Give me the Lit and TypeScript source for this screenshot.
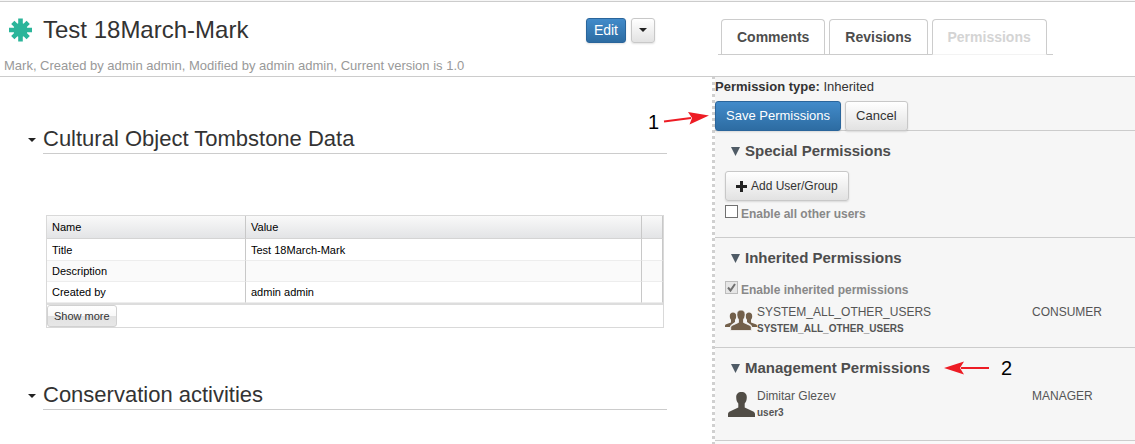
import { LitElement, html, css, nothing } from "lit";
import { customElement, property, state } from "lit/decorators.js";

const sans = css`"Liberation Sans", Arial, Helvetica, sans-serif`;

const buttonStyles = css`
  button {
    font-family: inherit;
    cursor: pointer;
  }
  .btn {
    box-sizing: border-box;
    display: inline-flex;
    align-items: center;
    justify-content: center;
    height: 30px;
    padding: 0 10px;
    border: 1px solid #c8c8c8;
    border-radius: 3px;
    background: linear-gradient(#fff, #e2e2e2);
    box-shadow: 0 1px 2px rgba(0, 0, 0, 0.12);
    color: #333;
    font-size: 12px;
    line-height: 16px;
    white-space: nowrap;
  }
  .btn.primary {
    border-color: #2a659b;
    background: linear-gradient(#428bca, #2d6ca2);
    color: #fff;
  }
`;

/** Collapsible block of the object form. */
@customElement("form-section")
class FormSection extends LitElement {
  @property() heading = "";
  @state() private open = true;

  static styles = css`
    :host {
      display: block;
    }
    .heading {
      display: flex;
      align-items: center;
      margin: 0;
      font-size: 22px;
      font-weight: 400;
      line-height: 28px;
      color: #333;
    }
    .toggle {
      flex: none;
      display: flex;
      width: 15px;
      padding: 0;
      border: 0;
      background: none;
      cursor: pointer;
    }
    .label {
      flex: 1;
      border-bottom: 1px solid #ccc;
    }
    .body {
      padding-left: 18px;
    }
  `;

  render() {
    return html`
      <h2 class="heading">
        <button class="toggle" aria-expanded=${this.open} aria-label="Toggle ${this.heading}" @click=${() => (this.open = !this.open)}>
          <svg width="8" height="4" viewBox="0 0 8 4"><path d="M0 0h8L4 4z" fill="#222" /></svg>
        </button>
        <span class="label">${this.heading}</span>
      </h2>
      ${this.open ? html`<div class="body"><slot></slot></div>` : nothing}
    `;
  }
}

/** Name/value grid with a footer button. */
@customElement("property-grid")
class PropertyGrid extends LitElement {
  private rows = [
    ["Title", "Test 18March-Mark"],
    ["Description", ""],
    ["Created by", "admin admin"],
  ];

  static styles = css`
    :host {
      display: block;
      border: 1px solid #d9d9d9;
      font-family: ${sans};
      font-size: 11px;
      line-height: 16px;
      color: #000;
    }
    table {
      width: 100%;
      table-layout: fixed;
      border-collapse: separate;
      border-spacing: 0;
      border-bottom: 2px solid #ddd;
    }
    th,
    td {
      box-sizing: border-box;
      height: 21px;
      padding: 0 5px;
      border-right: 1px solid #c8c8c8;
      border-bottom: 1px solid #ededed;
      text-align: left;
      font-weight: 400;
    }
    th {
      height: 23px;
      border-bottom-color: #d4d4d4;
      background: linear-gradient(#f9f9f9, #e3e4e6);
    }
    tbody tr:first-child td {
      height: 22px;
    }
    .name {
      width: 199px;
    }
    .end {
      width: 21px;
    }
    tbody tr:nth-child(even) td {
      background: #fafafa;
    }
    .more {
      display: block;
      height: 22px;
      padding: 0 6px;
      border: 1px solid #d1d1d1;
      border-radius: 3px;
      background: linear-gradient(#fff, #f9f9f9 48%, #e2e2e2 52%, #e7e7e7);
      color: #333;
      font: inherit;
      cursor: pointer;
    }
  `;

  render() {
    return html`
      <table>
        <thead>
          <tr><th class="name">Name</th><th>Value</th><th class="end"></th></tr>
        </thead>
        <tbody>
          ${this.rows.map(([name, value]) => html`<tr><td>${name}</td><td>${value}</td><td></td></tr>`)}
        </tbody>
      </table>
      <button class="more">Show more</button>
    `;
  }
}

/** Titled block of the permissions panel. */
@customElement("permission-group")
class PermissionGroup extends LitElement {
  @property() heading = "";
  @state() private open = true;

  static styles = css`
    :host {
      display: block;
      border-top: 1px solid #ccc;
      padding: 10px 10px 15px;
    }
    h3 {
      margin: 0 0 10px;
      font-size: 15px;
      line-height: 20px;
    }
    .toggle {
      display: flex;
      align-items: center;
      gap: 5px;
      padding: 0 0 0 6px;
      border: 0;
      background: none;
      color: #4d4d4d;
      font: inherit;
      cursor: pointer;
    }
  `;

  render() {
    return html`
      <h3>
        <button class="toggle" aria-expanded=${this.open} @click=${() => (this.open = !this.open)}>
          <svg width="9" height="9" viewBox="0 0 9 9"><path d="M0 0h9L4.5 9z" fill="#4f5b66" /></svg>
          ${this.heading}
        </button>
      </h3>
      ${this.open ? html`<slot></slot>` : nothing}
    `;
  }
}

/** One person or group along with its role. */
@customElement("authority-row")
class AuthorityRow extends LitElement {
  @property() name = "";
  @property() account = "";
  @property() role = "";
  @property() kind = "user";

  static styles = css`
    :host {
      display: grid;
      grid-template-columns: 32px minmax(0, 1fr) 93px;
      align-items: start;
      color: #555;
      font-size: 12px;
      line-height: 16px;
    }
    .icon {
      display: flex;
      padding-top: 4px;
    }
    .account {
      font-size: 10px;
      font-weight: 700;
      line-height: 18px;
    }
  `;

  private get icon() {
    return this.kind === "group"
      ? html`<svg width="32" height="25" viewBox="0 -2 32 25" fill="#73604b">
          <path d="M8 2.500c2 0 3.200 1.400 3.200 3.500 0 1.600-.4 3-1.200 3.800v2.200l-3.500 2.600c-1 .8-1.500 1.700-1.700 2.400H0v-1.200c0-.8.4-1.300 1.200-1.600L6 12.400V9.800C5.200 9 4.800 7.600 4.800 6 4.800 3.900 6 2.500 8 2.500z" />
          <path d="M24 2.500c-2 0-3.200 1.400-3.200 3.500 0 1.600.4 3 1.200 3.800v2.200l3.500 2.600c1 .8 1.500 1.700 1.700 2.400H32v-1.200c0-.8-.4-1.300-1.200-1.600L26 12.400V9.800c.8-.8 1.200-2.200 1.200-3.800 0-2.100-1.200-3.500-3.200-3.500z" />
          <path d="M16 0c2.700 0 4.100 1.600 4.100 4.300 0 2.200-.6 4-1.600 5v3.200l6 2.700c1.300.6 1.800 1.200 1.800 2.400V20.500H5.700v-2.900c0-1.200.5-1.800 1.800-2.400l6-2.700V9.300c-1-1-1.600-2.800-1.600-5C11.900 1.600 13.300 0 16 0z" stroke="#f6f6f6" stroke-width=".8" />
        </svg>`
      : html`<svg width="32" height="25" viewBox="0 0 32 25" fill="#514d46">
          <path d="M16.500 0c3.500 0 5.300 2 5.300 5.300 0 2.700-.8 5-2.100 6.200v4l8 3.700c1.600.7 2.300 1.500 2.300 3V25H3v-2.800c0-1.500.7-2.300 2.300-3l8-3.700v-4c-1.300-1.200-2.100-3.500-2.100-6.200C11.200 2 13 0 16.500 0z" />
        </svg>`;
  }

  render() {
    return html`
      <span class="icon">${this.icon}</span>
      <div>
        <div>${this.name}</div>
        <div class="account">${this.account}</div>
      </div>
      <span>${this.role}</span>
    `;
  }
}

@customElement("permissions-panel")
class PermissionsPanel extends LitElement {
  static styles = [
    buttonStyles,
    css`
      :host {
        display: block;
        padding-left: 3px;
        background: repeating-linear-gradient(#d0d0d0 0 2px, #fff 2px 5px, #d0d0d0 5px 6px) 0 0 / 3px 6px repeat-y,
          #f6f6f6;
      }
      .type {
        margin: 0;
        padding: 1px 0 5px;
        font-size: 13px;
        line-height: 18px;
        color: #333;
      }
      .actions {
        display: flex;
        gap: 4px;
        margin-bottom: -1px;
        position: relative;
      }
      .actions .btn {
        font-size: 13px;
      }
      .check {
        display: flex;
        align-items: center;
        gap: 3px;
        color: #888;
        font-size: 12px;
        font-weight: 700;
        line-height: 16px;
      }
      .add {
        margin-bottom: 4px;
        gap: 4px;
      }
      input {
        appearance: none;
        box-sizing: border-box;
        flex: none;
        width: 13px;
        height: 13px;
        margin: 0 0 4px;
        border: 1px solid #707070;
        background: #fff;
      }
      input:disabled {
        border-color: #bcbcbc;
        background: #e6e6e6;
      }
      input:checked {
        background-image: url("data:image/svg+xml,%3Csvg xmlns='http://www.w3.org/2000/svg' viewBox='0 0 11 11'%3E%3Cpath d='M2 5.500l2.500 3L9 2' fill='none' stroke='%23707070' stroke-width='2'/%3E%3C/svg%3E");
      }
      .inherited {
        padding-bottom: 9px;
      }
      .inherited .check {
        margin: 13px 0 6px;
      }
      .management {
        padding-bottom: 18px;
      }
      .end {
        height: 3px;
        border-top: 1px solid #ccc;
        background: #f9f9f9;
      }
    `,
  ];

  render() {
    return html`
      <p class="type"><b>Permission type:</b> Inherited</p>
      <div class="actions">
        <button class="btn primary">Save Permissions</button>
        <button class="btn">Cancel</button>
      </div>
      <permission-group heading="Special Permissions">
        <button class="btn add">
          <svg width="11" height="11" viewBox="0 0 11 11"><path d="M5.500 0v11M0 5.500h11" stroke="#222" stroke-width="3" /></svg>
          Add User/Group
        </button>
        <label class="check"><input type="checkbox" /> Enable all other users</label>
      </permission-group>
      <permission-group class="inherited" heading="Inherited Permissions">
        <label class="check"><input type="checkbox" checked disabled /> Enable inherited permissions</label>
        <authority-row kind="group" name="SYSTEM_ALL_OTHER_USERS" account="SYSTEM_ALL_OTHER_USERS" role="CONSUMER"></authority-row>
      </permission-group>
      <permission-group class="management" heading="Management Permissions">
        <authority-row name="Dimitar Glezev" account="user3" role="MANAGER"></authority-row>
      </permission-group>
      <div class="end"></div>
    `;
  }
}

@customElement("app-root")
class AppRoot extends LitElement {
  @state() private tab = "Permissions";
  private tabs = ["Comments", "Revisions", "Permissions"];

  static styles = [
    buttonStyles,
    css`
      :host {
        display: block;
        position: relative;
        overflow: hidden;
        min-height: 100vh;
        box-sizing: border-box;
        border-top: 1px solid #f6f6f6;
        background: #fff;
        font-family: ${sans};
      }
      header,
      .content {
        display: grid;
        grid-template-columns: minmax(0, 1fr) 423px;
      }
      header {
        border-top: 1px solid #ccc;
        border-bottom: 1px solid #ccc;
      }
      .title {
        display: flex;
        align-items: center;
        gap: 5px;
        height: 56px;
        padding: 0 57px 0 8px;
      }
      h1 {
        flex: 1;
        margin: 0;
        padding-left: 6px;
        font-size: 24px;
        font-weight: 400;
        line-height: 30px;
        color: #333;
      }
      .title .btn {
        height: 25px;
        padding: 0 7px;
        font-size: 14px;
      }
      .meta {
        margin: 0;
        padding: 0 4px 2px;
        font-size: 13px;
        line-height: 16px;
        color: #999;
      }
      .tabs {
        display: flex;
        align-self: start;
        justify-self: start;
        gap: 4px;
        margin: 17px 0 0 6px;
        padding: 0 6px 0 3px;
        border-bottom: 1px solid #ccc;
      }
      .tab {
        height: 35px;
        padding: 0 15px;
        border: 1px solid #ccc;
        border-bottom: 0;
        border-radius: 4px 4px 0 0;
        background: #fff;
        color: #4d4d4d;
        font-size: 14px;
        font-weight: 700;
      }
      .tab[aria-selected="true"] {
        height: 36px;
        margin-bottom: -1px;
        border-bottom: 1px solid #f3f3f3;
        color: #d4d4d4;
      }
      .form {
        padding: 48px 45px 0 28px;
      }
      property-grid {
        margin: 61px 3px 53px 0;
      }
      .note {
        position: absolute;
        display: flex;
        align-items: center;
        color: #000;
        font-size: 20px;
        line-height: 24px;
      }
      .note.save {
        top: 109px;
        right: 426px;
        gap: 4px;
      }
      .note.management {
        top: 355px;
        right: 123px;
        gap: 12px;
      }
    `,
  ];

  render() {
    return html`
      <header>
        <div>
          <div class="title">
            <svg width="24" height="24" viewBox="0 0 24 24" stroke="#2bb59a" stroke-width="4.600">
              <path d="M12.500 0.500v23M1 12h23M4.800 4.300l15.400 15.400M20.200 4.300L4.800 19.700" />
              <circle cx="12.500" cy="12" r="7" fill="#2bb59a" stroke="none" />
            </svg>
            <h1>Test 18March-Mark</h1>
            <button class="btn primary">Edit</button>
            <button class="btn" aria-label="More actions">
              <svg width="8" height="4" viewBox="0 0 8 4"><path d="M0 0h8L4 4z" fill="#222" /></svg>
            </button>
          </div>
          <p class="meta">Mark, Created by admin admin, Modified by admin admin, Current version is 1.0</p>
        </div>
        <div class="tabs" role="tablist">
          ${this.tabs.map(
            (name) => html`<button class="tab" role="tab" aria-selected=${name === this.tab} @click=${() => (this.tab = name)}>${name}</button>`
          )}
        </div>
      </header>
      <div class="content">
        <main class="form">
          <form-section heading="Cultural Object Tombstone Data"><property-grid></property-grid></form-section>
          <form-section heading="Conservation activities"></form-section>
        </main>
        <permissions-panel></permissions-panel>
      </div>
      <div class="note save">
        <span>1</span>
        <svg width="46" height="20" viewBox="0 1 46 20"><path d="M1 10.500l27-3.600" stroke="#ed1c24" stroke-width="2" /><path d="M46 4.500L25 1l4 5.900-2.500 6.600z" fill="#ed1c24" /></svg>
      </div>
      <div class="note management">
        <svg width="45" height="14" viewBox="0 0 45 14"><path d="M17 7h28" stroke="#ed1c24" stroke-width="2" /><path d="M0 7l20-6.500L16 7l4 6.500z" fill="#ed1c24" /></svg>
        <span>2</span>
      </div>
    `;
  }
}
